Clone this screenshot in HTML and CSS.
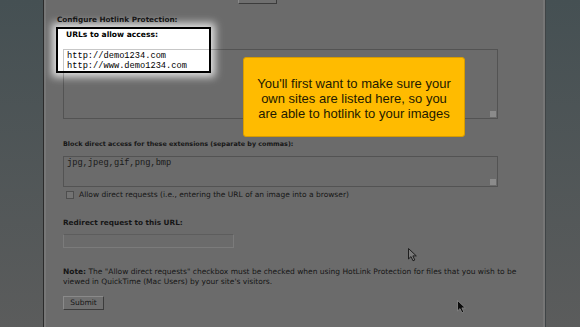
FILE: index.html
```html
<!DOCTYPE html>
<html lang="en">
<head>
    <meta charset="UTF-8">
    <meta name="viewport" content="width=device-width, initial-scale=1.0">
    <title>Hotlink Protection</title>
    <link rel="stylesheet" href="styles.css">
</head>
<body>
    <div class="panel">
        <!-- highlight box drawn over the page -->
        <div class="spot"></div>

        <div class="form">
            <div class="top-row">
                <button class="btn btn-top">Enable</button>
            </div>

            <h3 class="heading">Configure Hotlink Protection:</h3>

            <div class="field">
                <label class="label label-hot">URLs to allow access:</label>
                <div class="textarea textarea-big">
                    <div>http://demo1234.com</div>
                    <div>http://www.demo1234.com</div>
                    <span class="grip"></span>
                </div>
            </div>

            <div class="field field-ext">
                <label class="label label-ext">Block direct access for these extensions (separate by commas):</label>
                <div class="textarea textarea-small">
                    <div>jpg,jpeg,gif,png,bmp</div>
                    <span class="grip"></span>
                </div>
                <div class="check-row">
                    <span class="checkbox"></span>
                    <span>Allow direct requests (i.e., entering the URL of an image into a browser)</span>
                </div>
            </div>

            <div class="field field-redirect">
                <label class="label">Redirect request to this URL:</label>
                <div class="input"></div>
            </div>

            <p class="note"><b>Note:</b> The "Allow direct requests" checkbox must be checked when using HotLink Protection for files that you wish to be viewed in QuickTime (Mac Users) by your site's visitors.</p>

            <button class="btn btn-submit">Submit</button>
        </div>

        <div class="callout">
            You'll first want to make sure your own sites are listed here, so you are able to hotlink to your images
        </div>

        <svg class="cursor cursor-outline" width="10" height="14" viewBox="0 0 10 14">
            <path d="M0.5 0.5 L0.5 11 L3 8.6 L5 12.8 L6.8 12 L4.9 7.9 L8.3 7.9 Z" fill="#7a7a7a" stroke="#1e1e1e" stroke-width="1"/>
        </svg>
        <svg class="cursor cursor-black" width="10" height="14" viewBox="0 0 10 14">
            <path d="M0.5 0.5 L0.5 11 L3 8.6 L5 12.8 L6.8 12 L4.9 7.9 L8.3 7.9 Z" fill="#0c0c0c" stroke="#8a8a8a" stroke-width="0.8"/>
        </svg>
    </div>
</body>
</html>
```

FILE: styles.css
```css
/* General Styles */
html, body {
    margin: 0;
    height: 327px;
    overflow: hidden;
}

body {
    font-family: "DejaVu Sans", Verdana, sans-serif;
    font-size: 7.5px;
    line-height: 10px;
    color: #161616;
    background: linear-gradient(to bottom, #455053, #5b5c5c);
}

.panel {
    position: relative;
    margin-left: 43px;
    width: 501px;
    height: 327px;
    background: #6b6b6b;
    border-left: 1px solid #2b2b2b;
    border-right: 1px solid #3f4446;
    box-shadow: inset 2px 0 0 #777, inset -2px 0 0 #767676;
    overflow: hidden;
}

.form {
    position: relative;
    z-index: 2;
    padding-left: 13px;
}

.top-row {
    display: flex;
    height: 4px;
    padding-left: 181px;
}

.btn {
    font-family: "DejaVu Sans", Verdana, sans-serif;
    font-size: 7.5px;
    line-height: 10px;
    color: #161616;
    background: #6f6f6f;
    border: 1px solid;
    border-color: #8a8a8a #3c3c3c #3c3c3c #8a8a8a;
    padding: 1px 0;
    height: 14px;
    display: block;
    text-align: center;
}

.btn-top {
    margin-top: -10px;
    width: 39px;
    flex: none;
}

.heading {
    margin: 11px 0 0;
    font-size: 7.3px;
    line-height: 10px;
    font-weight: bold;
}

.field {
    margin-left: 6px;
}

.label {
    display: block;
    font-weight: bold;
    font-size: 7.3px;
}

.label-hot {
    margin-top: 5px;
    padding-left: 3px;
    font-size: 7.6px;
    color: #000;
}

.label-ext {
    font-size: 6.4px;
}

.textarea {
    position: relative;
    box-sizing: border-box;
    width: 435px;
    border: 1px solid rgba(0, 0, 0, 0.22);
    padding: 1px 3px;
    font-family: "Liberation Mono", "Courier New", monospace;
    font-size: 8.7px;
    line-height: 10px;
    color: #000;
}

.textarea-big {
    margin-top: 9px;
    height: 70px;
}

.textarea-small {
    margin-top: 7px;
    height: 31px;
    color: #1a1a1a;
}

.grip {
    position: absolute;
    right: 1px;
    bottom: 1px;
    width: 6px;
    height: 6px;
    background: radial-gradient(circle, #8c8c8c 0.7px, transparent 0.9px) 0 0 / 2px 2px;
}

.field-ext {
    margin-top: 20px;
}

.check-row {
    display: flex;
    align-items: center;
    margin-top: 3px;
    height: 10px;
}

.checkbox {
    width: 6px;
    height: 6px;
    border: 1px solid #4e4e4e;
    background: #737373;
    margin: 0 5px 0 3px;
}

.field-redirect {
    margin-top: 18px;
}

.input {
    margin-top: 6px;
    width: 171px;
    height: 14px;
    box-sizing: border-box;
    border: 1px solid #7b7b7b;
    border-top-color: #5d5d5d;
}

.note {
    margin: 19px 0 0 6px;
    width: 458px;
}

.btn-submit {
    margin: 9px 0 0 6px;
    width: 41px;
}

.spot {
    position: absolute;
    z-index: 1;
    left: 12px;
    top: 27px;
    width: 151px;
    height: 42px;
    background: #fff;
    border: 2px solid #000;
    box-shadow: 0 0 8px 4px rgba(255, 255, 255, 0.8);
}

.callout {
    position: absolute;
    z-index: 3;
    left: 199px;
    top: 57px;
    width: 204px;
    height: 47px;
    padding: 18px 8px 13px;
    background: #ffbb00;
    border: 1px solid #d79c00;
    border-radius: 3px;
    font-family: "Liberation Sans", Arial, sans-serif;
    font-size: 13px;
    line-height: 15px;
    color: #231a00;
    text-align: center;
}

.cursor {
    position: absolute;
    z-index: 4;
}

.cursor-outline {
    left: 364px;
    top: 248px;
}

.cursor-black {
    left: 413px;
    top: 300px;
}
```
